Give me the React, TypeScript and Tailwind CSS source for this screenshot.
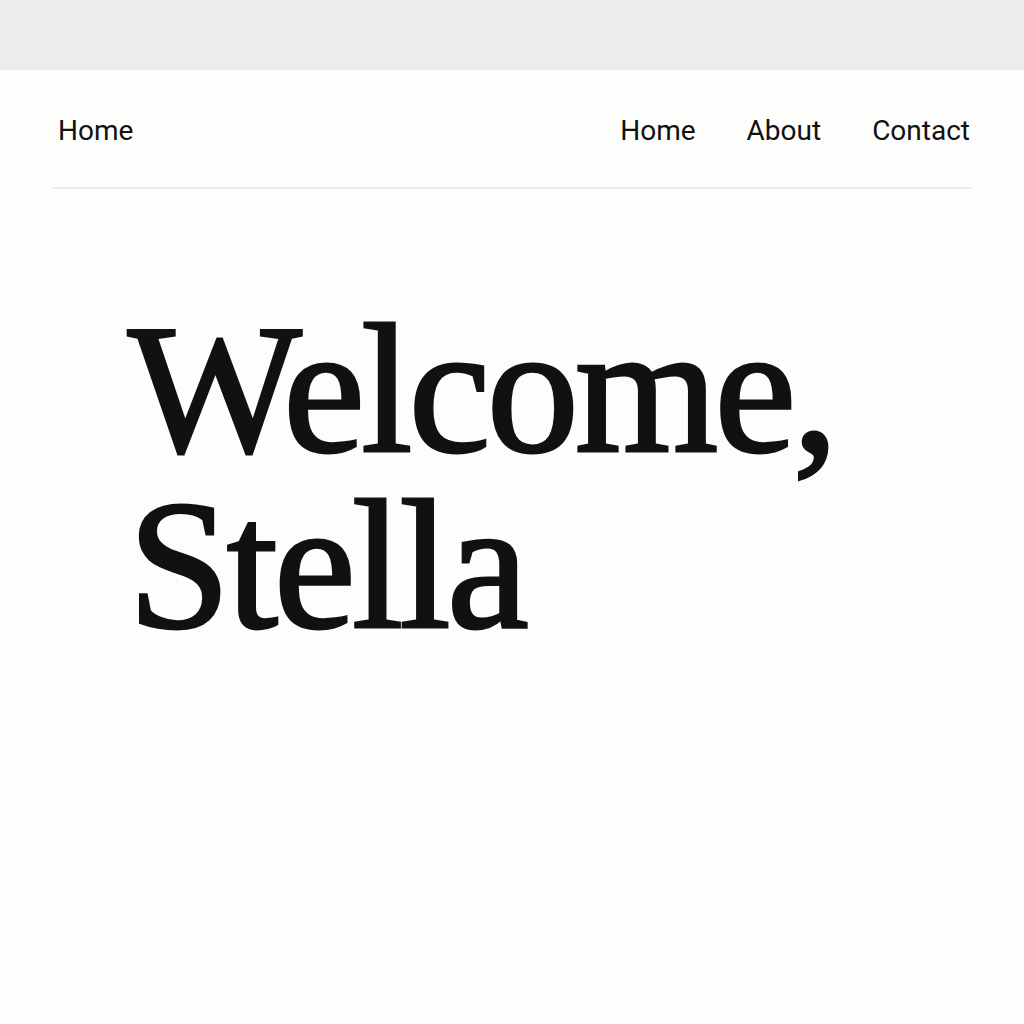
import React from 'react';

const links = ['Home', 'About', 'Contact'];

export default function App() {
    return (
        <div className="min-h-screen bg-[#fdfdfc] flex flex-col">
            <div className="h-[70px] bg-[#ececec]" />
            <div className="px-[52px]">
                <header className="flex items-center justify-between pt-[44px] pb-[39px] border-b-2 border-[#ececea] font-['Roboto',sans-serif] text-[28px] leading-[34px] text-[#111]">
                    <a className="pl-[6px]">Home</a>
                    <nav className="flex gap-[51px] pr-[2px]">
                        {links.map((l) => (
                            <a key={l}>{l}</a>
                        ))}
                    </nav>
                </header>
                <main className="pt-[112px] pl-[76px]">
                    <h1 className="font-['Liberation_Serif',serif] text-[184px] leading-[176px] tracking-[-0.02em] text-[#111] [-webkit-text-stroke:3px_#111]">
                        Welcome,
                        <br />
                        Stella
                    </h1>
                </main>
            </div>
        </div>
    );
}
